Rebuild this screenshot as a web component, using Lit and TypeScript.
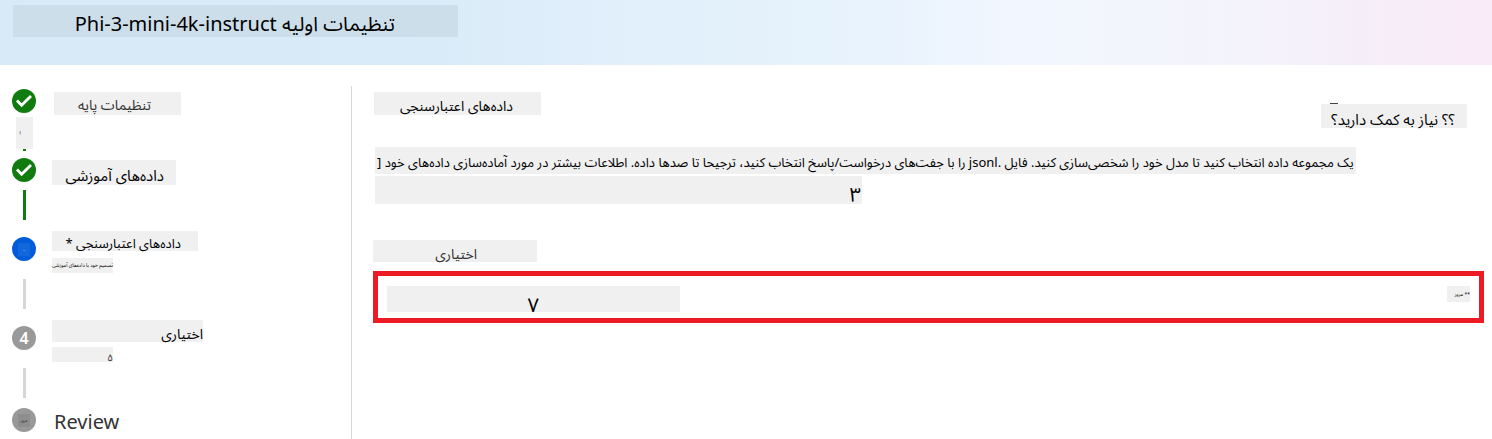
import { LitElement, html, css, nothing } from "lit";
import { customElement, property } from "lit/decorators.js";

@customElement("step-dot")
export class StepDot extends LitElement {
  @property() state = "done";
  @property() mark = "";

  static styles = css`
    :host { display: block; width: 24px; height: 24px; }
    .dot {
      display: flex; align-items: center; justify-content: center;
      width: 24px; height: 24px; border-radius: 50%;
      color: #fff; font-size: 16px; line-height: 24px;
    }
    .done { background: #107c10; }
    .current { background: #015cda; }
    .todo { background: #999; font-weight: 600; }
    .last { background: #999; color: #222; }
    .patch { width: 12px; height: 13px; font-size: 4px; line-height: 13px; text-align: center; }
    .current .patch { background: #1267dc; }
    .last .patch { background: #8e8e8e; }
  `;

  render() {
    const small = this.state === "current" || this.state === "last";
    return html`<span class="dot ${this.state}">
      ${this.state === "done"
        ? html`<svg width="24" height="24" viewBox="0 0 24 24" aria-label="Done">
            <path d="M5 11.6 L9.6 16.2 L19 6.9" fill="none" stroke="#fff" stroke-width="2.8" />
          </svg>`
        : small
          ? html`<span class="patch">${this.mark}</span>`
          : this.mark}
    </span>`;
  }
}

interface Step {
  kind: string;
  state: string;
  mark?: string;
  label: string;
  note?: string;
}

const steps: Step[] = [
  { kind: "basic", state: "done", label: "تنظیمات پایه" },
  { kind: "training", state: "done", label: "داده‌های آموزشی" },
  { kind: "validation", state: "current", mark: "..", label: "داده‌های اعتبارسنجی *", note: "تصمیم خود با داده‌های آموزشی" },
  { kind: "optional", state: "todo", mark: "4", label: "اختیاری", note: "۵" },
  { kind: "review", state: "last", mark: "مرور", label: "Review" },
];

@customElement("app-root")
export class AppRoot extends LitElement {
  static styles = css`
    :host {
      display: flex; flex-direction: column; min-height: 100vh;
      background: #fff; color: #000;
      font-family: "Noto Sans", "Noto Sans Arabic", "DejaVu Sans", sans-serif;
    }
    * { box-sizing: border-box; }
    h1, h2, p, ol { margin: 0; padding: 0; font-weight: 400; }
    button { font: inherit; color: inherit; border: 0; margin: 0; }
    .banner {
      height: 65px; padding: 5px 13px;
      background: linear-gradient(90deg, #d8eaf8 0%, #d9eaf8 26%, #e3f1fb 48%, #e9f3fd 60%, #f2f7ff 68%, #f4f4fb 82%, #f5eef8 91%, #f9ebf8 98%);
    }
    .title {
      width: 445px; height: 32px; background: #ccdee9;
      padding-right: 63px; font-size: 20px; line-height: 38px; text-align: right; white-space: nowrap;
    }
    .body { display: flex; flex: 1; padding-top: 21px; }
    .steps { width: 351px; flex: none; list-style: none; padding: 3px 0 0 12px; }
    .step { display: flex; gap: 16px; }
    .basic, .review { gap: 18px; }
    .rail { display: flex; flex-direction: column; align-items: center; width: 24px; flex: none; }
    .line { width: 3px; height: 30px; margin: 8px 0 11px; background: #d6d6d6; }
    .training .line { background: #107c10; }
    .validation .rail, .optional .rail { padding-top: 6px; }
    .validation .line, .optional .line { margin-top: 18px; }
    .optional .line { margin-bottom: 10px; }
    .stub { display: flex; flex-direction: column; align-items: center; margin: 4px 0 7px; }
    .stub-box { width: 17px; height: 32px; background: #f0f0f0; font-size: 5px; line-height: 32px; padding-left: 4px; }
    .stub-end { width: 3px; height: 2px; background: #107c10; }
    .texts { display: flex; flex-direction: column; align-items: flex-start; }
    .chip { background: #f0f0f0; white-space: nowrap; }
    .label { font-size: 14px; }
    .basic .label { width: 127px; height: 23px; margin-top: 3px; padding-right: 30px; line-height: 26px; color: #333; }
    .training .label { width: 124px; height: 25px; margin-top: 2px; padding-right: 12px; line-height: 30px; font-size: 15px; }
    .validation .label { width: 146px; height: 20px; padding-right: 17px; line-height: 24px; font-size: 13px; }
    .optional .label { width: 151px; height: 22px; line-height: 28px; }
    .review .label { background: none; font-size: 20px; line-height: 28px; color: #333; }
    .note { width: 61px; height: 15px; font-size: 5px; line-height: 15px; }
    .validation .note { margin-top: 7px; }
    .optional .note { margin-top: 5px; font-size: 10px; line-height: 20px; color: #333; }
    .main { flex: 1; min-width: 0; border-left: 1px solid #d8d8d8; padding: 6px 8px 0 21px; }
    .top { display: flex; justify-content: space-between; align-items: flex-start; padding-left: 1px; }
    .heading { width: 167px; height: 23px; padding-right: 28px; font-size: 14px; line-height: 28px; }
    .help { position: relative; width: 146px; height: 24px; margin: 12px 17px 0 0; padding: 0 12px 0 0; font-size: 15px; line-height: 30px; text-align: right; }
    .help::before { content: ""; position: absolute; left: 9px; top: -1px; width: 8px; height: 1px; background: #444; }
    .intro { display: flex; flex-direction: column; align-items: flex-start; gap: 2px; margin-top: 19px; padding-left: 2px; }
    .lead { height: 27px; font-size: 13px; line-height: 30px; padding: 0 2px; }
    .count { width: 487px; height: 28px; padding-right: 1px; font-size: 20px; line-height: 38px; }
    .caption { display: block; width: 164px; height: 22px; margin-top: 36px; padding-right: 60px; font-size: 14px; line-height: 28px; color: #333; }
    .picker {
      display: flex; justify-content: space-between; align-items: flex-start;
      width: 100%; height: 52px; margin-top: 9px; padding: 10px 9px;
      border: 5px solid #ed1c24; background: #fff; text-align: right;
    }
    .value { width: 293px; height: 26px; padding-right: 141px; font-size: 20px; line-height: 38px; }
    .hint { width: 23px; height: 16px; font-size: 5px; line-height: 16px; }
  `;

  render() {
    return html`
      <header class="banner">
        <h1 class="title" dir="rtl">تنظیمات اولیه Phi-3-mini-4k-instruct</h1>
      </header>
      <div class="body">
        <ol class="steps">
          ${steps.map((s) => html`
            <li class="step ${s.kind}">
              <div class="rail">
                <step-dot state=${s.state} mark=${s.mark ?? ""}></step-dot>
                ${s.kind === "basic"
                  ? html`<div class="stub"><span class="stub-box">ا</span><span class="stub-end"></span></div>`
                  : s.kind === "review" ? nothing : html`<span class="line"></span>`}
              </div>
              <div class="texts">
                <span class="chip label" dir="rtl">${s.label}</span>
                ${s.note ? html`<span class="chip note" dir="rtl">${s.note}</span>` : nothing}
              </div>
            </li>`)}
        </ol>
        <main class="main">
          <div class="top">
            <h2 class="chip heading" dir="rtl">داده‌های اعتبارسنجی</h2>
            <button class="chip help" dir="rtl">؟؟ نیاز به کمک دارید؟</button>
          </div>
          <div class="intro">
            <p class="chip lead" dir="rtl">یک مجموعه داده انتخاب کنید تا مدل خود را شخصی‌سازی کنید. فایل .jsonl را با جفت‌های درخواست/پاسخ انتخاب کنید، ترجیحا تا صدها داده. اطلاعات بیشتر در مورد آماده‌سازی داده‌های خود [</p>
            <p class="chip count" dir="rtl">۳</p>
          </div>
          <label class="chip caption" dir="rtl" for="dataset">اختیاری</label>
          <button class="picker" id="dataset" aria-haspopup="listbox">
            <span class="chip value" dir="rtl">۷</span>
            <span class="chip hint" dir="rtl">** مرور</span>
          </button>
        </main>
      </div>
    `;
  }
}
